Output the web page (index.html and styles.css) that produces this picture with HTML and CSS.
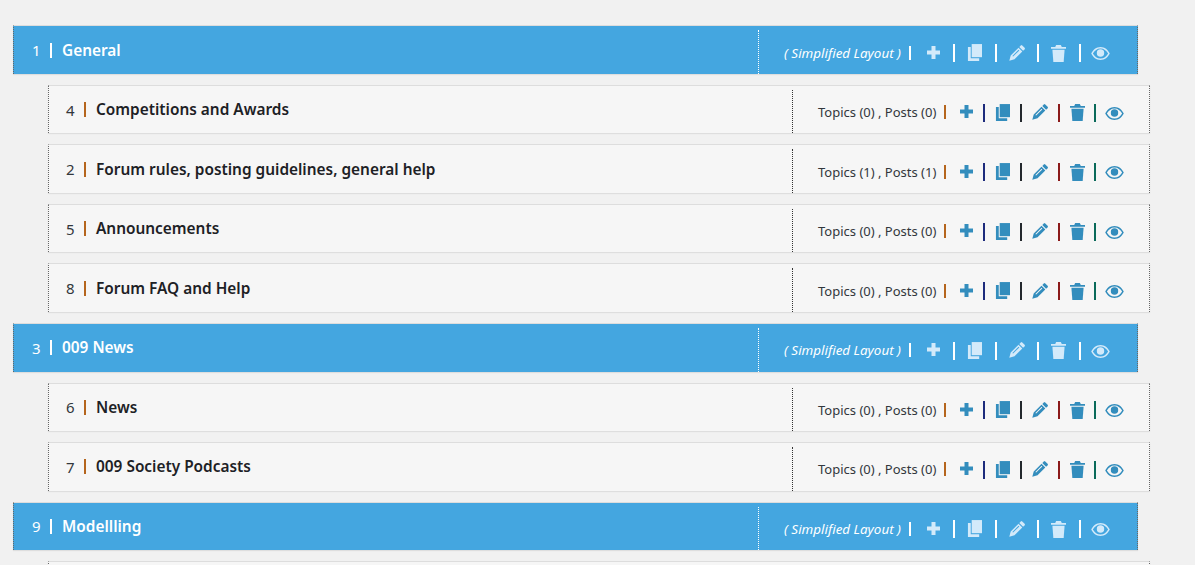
FILE: index.html
```html
<!DOCTYPE html>
<html lang="en">
<head>
  <meta charset="UTF-8">
  <title>Forums</title>
  <link rel="stylesheet" href="styles.css">
</head>
<body>
  <svg class="defs" width="0" height="0">
    <symbol id="i-plus" viewBox="0 0 15 15"><path d="M5.500 1h4v4.500H14v4H9.500V14h-4V9.500H1v-4h4.500z"/></symbol>
    <symbol id="i-copy" viewBox="0 0 16 18"><path d="M5 0h11v14H5z"/><path d="M1 3h3v12h9v3H1z"/></symbol>
    <symbol id="i-pencil" viewBox="0 0 16 16"><path d="M11.800.4a1 1 0 0 1 1.400 0l2.400 2.400a1 1 0 0 1 0 1.400l-1.500 1.500-3.800-3.800z"/><path fill-rule="evenodd" d="M9.500 2.700l3.800 3.800-7.800 7.800-5.200 1.400 1.400-5.200zM9.600 4.700L3.400 10.900l.7.700 6.200-6.200z"/></symbol>
    <symbol id="i-trash" viewBox="0 0 16 18"><path d="M5.500 0h5l1 2H16v2H0V2h4.500z"/><path d="M1.500 5h13l-1 13h-11z"/></symbol>
    <symbol id="i-eye" viewBox="0 0 20 14"><path fill-rule="evenodd" d="M10 0c4.500 0 8 3 10 7-2 4-5.500 7-10 7S2 11 0 7c2-4 5.500-7 10-7zM10 1.500C6.500 1.500 3.600 3.700 1.800 7c1.800 3.300 4.700 5.500 8.200 5.500s6.400-2.200 8.200-5.500C16.400 3.700 13.500 1.500 10 1.500z"/><circle cx="10" cy="6.500" r="4"/></symbol>
  </svg>

  <div class="forums">

    <div class="row cat">
      <div class="title"><span class="num">1</span><i class="sep"></i><b>General</b></div>
      <div class="side">
        <span class="meta"><em>( Simplified Layout )</em></span>
        <i class="sep"></i>
        <svg class="ic plus"><use href="#i-plus"/></svg><i class="sep big"></i>
        <svg class="ic copy"><use href="#i-copy"/></svg><i class="sep big"></i>
        <svg class="ic pencil"><use href="#i-pencil"/></svg><i class="sep big"></i>
        <svg class="ic trash"><use href="#i-trash"/></svg><i class="sep big"></i>
        <svg class="ic eye"><use href="#i-eye"/></svg>
      </div>
    </div>

    <div class="row sub">
      <div class="title"><span class="num">4</span><i class="sep s1"></i><b>Competitions and Awards</b></div>
      <div class="side">
        <span class="meta">Topics (0) , Posts (0)</span>
        <i class="sep s1"></i>
        <svg class="ic plus"><use href="#i-plus"/></svg><i class="sep big s2"></i>
        <svg class="ic copy"><use href="#i-copy"/></svg><i class="sep big s3"></i>
        <svg class="ic pencil"><use href="#i-pencil"/></svg><i class="sep big s4"></i>
        <svg class="ic trash"><use href="#i-trash"/></svg><i class="sep big s5"></i>
        <svg class="ic eye"><use href="#i-eye"/></svg>
      </div>
    </div>

    <div class="row sub">
      <div class="title"><span class="num">2</span><i class="sep s1"></i><b>Forum rules, posting guidelines, general help</b></div>
      <div class="side">
        <span class="meta">Topics (1) , Posts (1)</span>
        <i class="sep s1"></i>
        <svg class="ic plus"><use href="#i-plus"/></svg><i class="sep big s2"></i>
        <svg class="ic copy"><use href="#i-copy"/></svg><i class="sep big s3"></i>
        <svg class="ic pencil"><use href="#i-pencil"/></svg><i class="sep big s4"></i>
        <svg class="ic trash"><use href="#i-trash"/></svg><i class="sep big s5"></i>
        <svg class="ic eye"><use href="#i-eye"/></svg>
      </div>
    </div>

    <div class="row sub">
      <div class="title"><span class="num">5</span><i class="sep s1"></i><b>Announcements</b></div>
      <div class="side">
        <span class="meta">Topics (0) , Posts (0)</span>
        <i class="sep s1"></i>
        <svg class="ic plus"><use href="#i-plus"/></svg><i class="sep big s2"></i>
        <svg class="ic copy"><use href="#i-copy"/></svg><i class="sep big s3"></i>
        <svg class="ic pencil"><use href="#i-pencil"/></svg><i class="sep big s4"></i>
        <svg class="ic trash"><use href="#i-trash"/></svg><i class="sep big s5"></i>
        <svg class="ic eye"><use href="#i-eye"/></svg>
      </div>
    </div>

    <div class="row sub">
      <div class="title"><span class="num">8</span><i class="sep s1"></i><b>Forum FAQ and Help</b></div>
      <div class="side">
        <span class="meta">Topics (0) , Posts (0)</span>
        <i class="sep s1"></i>
        <svg class="ic plus"><use href="#i-plus"/></svg><i class="sep big s2"></i>
        <svg class="ic copy"><use href="#i-copy"/></svg><i class="sep big s3"></i>
        <svg class="ic pencil"><use href="#i-pencil"/></svg><i class="sep big s4"></i>
        <svg class="ic trash"><use href="#i-trash"/></svg><i class="sep big s5"></i>
        <svg class="ic eye"><use href="#i-eye"/></svg>
      </div>
    </div>

    <div class="row cat">
      <div class="title"><span class="num">3</span><i class="sep"></i><b>009 News</b></div>
      <div class="side">
        <span class="meta"><em>( Simplified Layout )</em></span>
        <i class="sep"></i>
        <svg class="ic plus"><use href="#i-plus"/></svg><i class="sep big"></i>
        <svg class="ic copy"><use href="#i-copy"/></svg><i class="sep big"></i>
        <svg class="ic pencil"><use href="#i-pencil"/></svg><i class="sep big"></i>
        <svg class="ic trash"><use href="#i-trash"/></svg><i class="sep big"></i>
        <svg class="ic eye"><use href="#i-eye"/></svg>
      </div>
    </div>

    <div class="row sub">
      <div class="title"><span class="num">6</span><i class="sep s1"></i><b>News</b></div>
      <div class="side">
        <span class="meta">Topics (0) , Posts (0)</span>
        <i class="sep s1"></i>
        <svg class="ic plus"><use href="#i-plus"/></svg><i class="sep big s2"></i>
        <svg class="ic copy"><use href="#i-copy"/></svg><i class="sep big s3"></i>
        <svg class="ic pencil"><use href="#i-pencil"/></svg><i class="sep big s4"></i>
        <svg class="ic trash"><use href="#i-trash"/></svg><i class="sep big s5"></i>
        <svg class="ic eye"><use href="#i-eye"/></svg>
      </div>
    </div>

    <div class="row sub">
      <div class="title"><span class="num">7</span><i class="sep s1"></i><b>009 Society Podcasts</b></div>
      <div class="side">
        <span class="meta">Topics (0) , Posts (0)</span>
        <i class="sep s1"></i>
        <svg class="ic plus"><use href="#i-plus"/></svg><i class="sep big s2"></i>
        <svg class="ic copy"><use href="#i-copy"/></svg><i class="sep big s3"></i>
        <svg class="ic pencil"><use href="#i-pencil"/></svg><i class="sep big s4"></i>
        <svg class="ic trash"><use href="#i-trash"/></svg><i class="sep big s5"></i>
        <svg class="ic eye"><use href="#i-eye"/></svg>
      </div>
    </div>

    <div class="row cat">
      <div class="title"><span class="num">9</span><i class="sep"></i><b>Modellling</b></div>
      <div class="side">
        <span class="meta"><em>( Simplified Layout )</em></span>
        <i class="sep"></i>
        <svg class="ic plus"><use href="#i-plus"/></svg><i class="sep big"></i>
        <svg class="ic copy"><use href="#i-copy"/></svg><i class="sep big"></i>
        <svg class="ic pencil"><use href="#i-pencil"/></svg><i class="sep big"></i>
        <svg class="ic trash"><use href="#i-trash"/></svg><i class="sep big"></i>
        <svg class="ic eye"><use href="#i-eye"/></svg>
      </div>
    </div>

    <div class="row sub"></div>

  </div>
</body>
</html>
```

FILE: styles.css
```css
html {
  overflow: hidden;
}

body {
  font-family: "Noto Sans", "Open Sans", sans-serif;
  background: #f1f1f1;
  color: #32373c;
  margin: 0;
  height: 565px;
  overflow: hidden;
}

.defs {
  position: absolute;
}

.forums {
  width: 1137px;
  padding: 25.2px 0 0 13px;
}

.row {
  display: flex;
  height: 48.5px;
  box-sizing: border-box;
  margin-bottom: 11px;
  border-top: 1px solid #ddd;
  border-left: 1px dotted #666;
  border-right: 1px dotted #666;
  box-shadow: 0 1px 1px rgba(0, 0, 0, 0.08);
}

.cat {
  width: 1125px;
  height: 48.7px;
  background: #44a6e0;
  color: #fff;
}

.sub {
  width: 1102px;
  margin-left: 35px;
  background: #f6f6f6;
}

.title {
  flex: 1;
  display: flex;
  align-items: center;
  font-size: 15.4px;
}

.cat .title {
  padding-left: 18px;
}

.sub .title {
  padding-left: 17px;
}

.num {
  width: 9px;
  font-size: 15px;
}

.title .sep {
  margin: 0 10px 0 9px;
  height: 15px;
}

.title b {
  font-weight: 600;
  color: #1d2125;
}

.cat .title b {
  color: #fff;
}

.side {
  display: flex;
  align-items: center;
  box-sizing: border-box;
  margin-top: 4px;
  padding: 1px 0 0 25px;
  border-left: 1px dotted #333;
  font-size: 13px;
}

.cat .side {
  width: 379px;
  border-left-color: #fff;
}

.sub .side {
  width: 357px;
}

.meta {
  width: 126px;
  white-space: nowrap;
}

.cat .meta {
  width: 125px;
  font-size: 13.4px;
}

.sep {
  display: block;
  width: 2px;
  height: 14px;
  flex: none;
  background: #fff;
}

.sub .sep.s1 { background: #b5651d; }
.sub .sep.s2 { background: #1d2b7c; }
.sub .sep.s3 { background: #23282d; }
.sub .sep.s4 { background: #8b1a1a; }
.sub .sep.s5 { background: #0a6a5a; }

.sep.big {
  height: 18px;
  margin-top: 1px;
}

.ic {
  display: block;
  flex: none;
  fill: #d3eafa;
}

.sub .ic {
  fill: #338dbd;
}

.plus {
  width: 15px;
  height: 15px;
  margin: -1px 9px 0 13px;
}

.copy {
  width: 15px;
  height: 17px;
  margin: 0 10px;
}

.pencil {
  width: 16px;
  height: 16px;
  margin: 0 10px;
}

.trash {
  width: 15px;
  height: 17px;
  margin: 1px 9px 0 10px;
}

.eye {
  width: 19px;
  height: 13px;
  margin: 2px 0 0 9px;
}

.cat .plus { margin: -1px 12px 0 15px; }
.cat .copy { margin: 0 13px 0 12px; }
.cat .pencil { margin: 0 12px; }
.cat .trash { margin: 1px 13px 0 12px; }
.cat .eye { margin-left: 10px; }
```
